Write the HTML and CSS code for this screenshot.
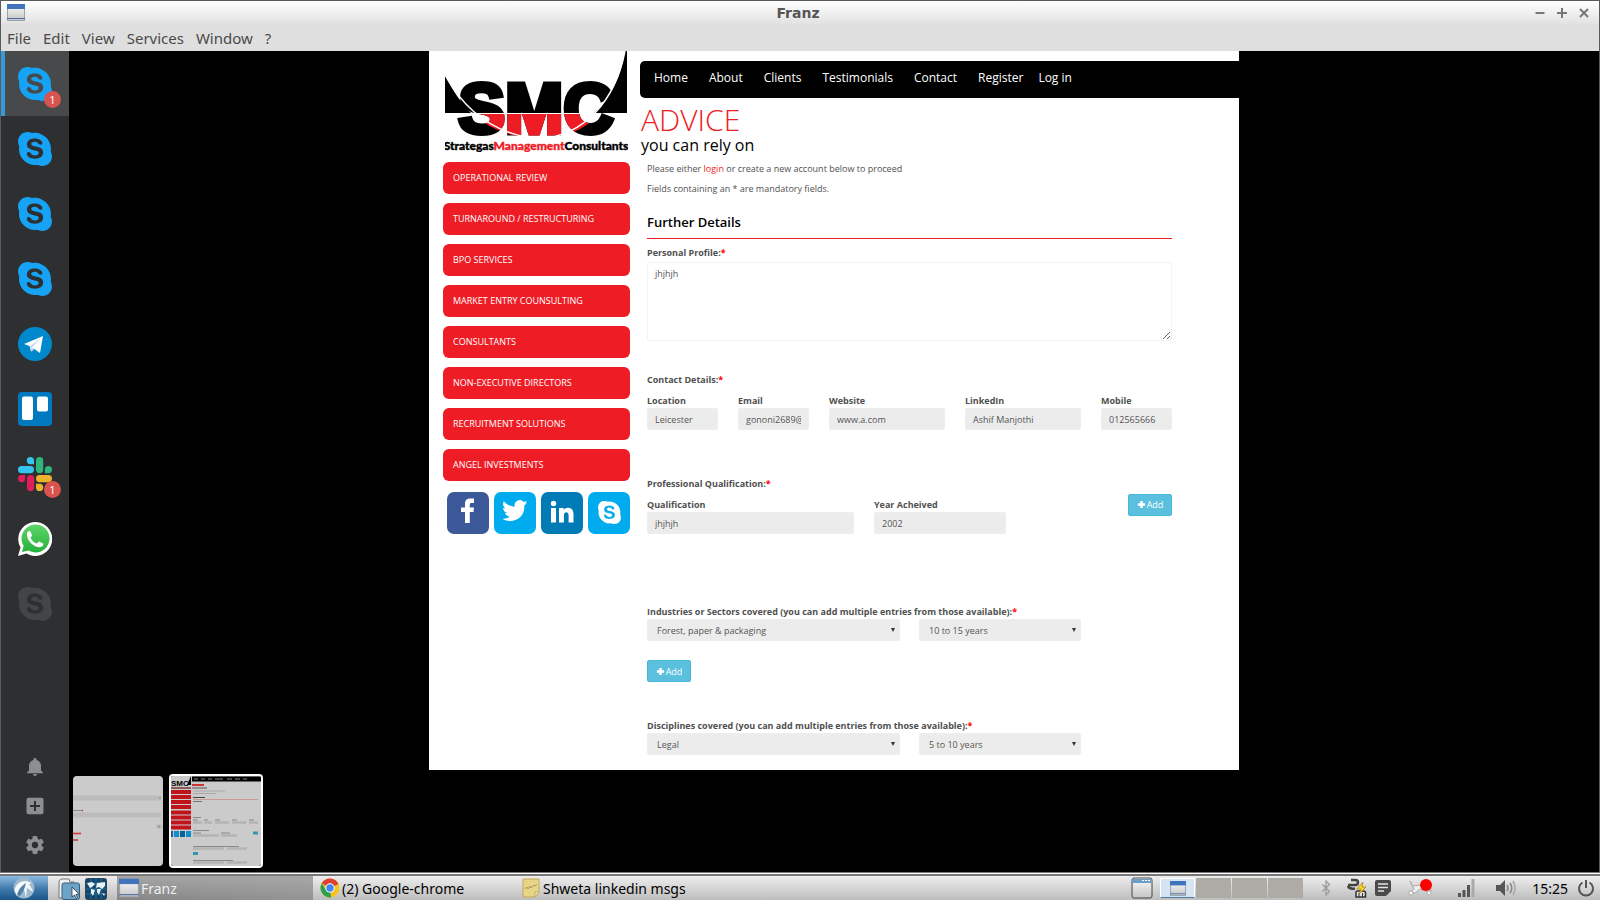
FILE: index.html
```html
<!DOCTYPE html>
<html lang="en">
<head>
<meta charset="utf-8">
<title>Franz</title>
<meta name="viewport" content="width=device-width, initial-scale=1">
<link rel="stylesheet" href="styles.css">
</head>
<body>
<svg class="defs" aria-hidden="true">
  <defs>
    <symbol id="skype" viewBox="0 0 24 24">
      <path d="M12.069 18.874c-4.023 0-5.82-1.979-5.82-3.464 0-.765.561-1.296 1.333-1.296 1.723 0 1.273 2.477 4.487 2.477 1.641 0 2.55-.895 2.55-1.811 0-.551-.269-1.16-1.354-1.429l-3.576-.895c-2.88-.724-3.403-2.286-3.403-3.751 0-3.047 2.861-4.191 5.549-4.191 2.471 0 5.393 1.373 5.393 3.199 0 .784-.688 1.24-1.453 1.24-1.469 0-1.198-2.037-4.164-2.037-1.469 0-2.292.664-2.292 1.617s1.153 1.258 2.157 1.487l2.637.587c2.891.649 3.624 2.346 3.624 3.944 0 2.476-1.902 4.324-5.722 4.324m11.084-4.882l-.029.135-.044-.24c.015.045.044.074.059.12.12-.675.181-1.363.181-2.052 0-1.529-.301-3.012-.898-4.42-.569-1.348-1.395-2.562-2.427-3.596-1.049-1.033-2.247-1.856-3.595-2.426-1.318-.631-2.801-.93-4.328-.93-.72 0-1.444.07-2.143.204l.119.06-.239-.033.119-.025C8.91.274 7.829 0 6.731 0c-1.789 0-3.47.698-4.736 1.967C.729 3.235.032 4.923.032 6.716c0 1.143.292 2.265.844 3.258l.02-.124.041.239-.06-.115c-.114.645-.172 1.299-.172 1.955 0 1.53.3 3.017.884 4.416.568 1.362 1.378 2.576 2.427 3.609 1.034 1.05 2.247 1.857 3.595 2.442 1.394.6 2.877.898 4.404.898.659 0 1.334-.06 1.977-.179l-.119-.062.24.046-.135.03c1.002.569 2.126.871 3.294.871 1.783 0 3.459-.69 4.733-1.963 1.259-1.259 1.962-2.951 1.962-4.749 0-1.138-.299-2.262-.853-3.266"/>
    </symbol>
    <linearGradient id="wa" x1="0" y1="0" x2="0" y2="1"><stop offset="0" stop-color="#5fd468"/><stop offset="1" stop-color="#25b13c"/></linearGradient>
    <linearGradient id="glass" x1="0" y1="0" x2="0" y2="1"><stop offset="0" stop-color="#fafafa"/><stop offset="1" stop-color="#c4c4c4"/></linearGradient>
    <symbol id="win" viewBox="0 0 18 17">
      <rect x=".5" y=".5" width="17" height="16" fill="url(#glass)" stroke="#9aa3ae"/>
      <rect width="18" height="5" fill="#3f74bd"/><rect y="14" width="18" height="1" fill="#4a6ea5"/>
    </symbol>
    <symbol id="plus" viewBox="0 0 10 10"><path d="M3.600 1h2.800v2.600H9v2.800H6.400V9H3.600V6.400H1V3.600h2.600z" fill="#fff"/></symbol>
  </defs>
</svg>

<div class="window">
  <header class="titlebar">
    <svg class="titleicon"><use href="#win"/></svg>
    <span class="title">Franz</span>
    <div class="controls">
      <button aria-label="Minimise"><svg viewBox="0 0 10 10"><path d="M.5 5h9" stroke="#777" stroke-width="2"/></svg></button>
      <button aria-label="Maximise"><svg viewBox="0 0 10 10"><path d="M0 5h10M5 0v10" stroke="#777" stroke-width="2"/></svg></button>
      <button aria-label="Close"><svg viewBox="0 0 10 10"><path d="M1 1l8 8M9 1L1 9" stroke="#777" stroke-width="2"/></svg></button>
    </div>
  </header>
  <nav class="menubar">
    <button>File</button><button>Edit</button><button>View</button><button>Services</button><button>Window</button><button>?</button>
  </nav>

  <div class="workspace">
    <aside class="services">
      <button class="service active" aria-label="Skype"><span class="logo"><svg class="skype"><use href="#skype"/></svg><span class="badge">1</span></span></button>
      <button class="service" aria-label="Skype"><span class="logo"><svg class="skype"><use href="#skype"/></svg></span></button>
      <button class="service" aria-label="Skype"><span class="logo"><svg class="skype"><use href="#skype"/></svg></span></button>
      <button class="service" aria-label="Skype"><span class="logo"><svg class="skype"><use href="#skype"/></svg></span></button>
      <button class="service" aria-label="Telegram"><span class="logo"><svg viewBox="0 0 34 34"><circle cx="17" cy="17" r="17" fill="#08c"/><path d="M12 19l1.500 6 4-4z" fill="#a9c6d8"/><path d="M6 17L25 9l-3 17-7-5-2 3-1.500-5z" fill="#fff"/><path d="M12 19l11-8-8.500 9-1.500 4.500z" fill="#c8daea"/></svg></span></button>
      <button class="service" aria-label="Trello"><span class="logo"><svg viewBox="0 0 34 34"><rect width="34" height="34" rx="4" fill="#0079bf"/><rect x="4" y="4.500" width="11" height="23.500" rx="2" fill="#fff"/><rect x="19" y="4.500" width="11" height="15" rx="2" fill="#fff"/></svg></span></button>
      <button class="service" aria-label="Slack"><span class="logo"><svg viewBox="0 0 34 34">
        <path d="M16 7.200h-3.600A3.600 3.600 0 1 1 16 3.600z" fill="#36c5f0"/><rect y="9" width="16" height="7.200" rx="3.600" fill="#36c5f0"/>
        <rect x="18" width="7.200" height="16.200" rx="3.600" fill="#2eb67d"/><path d="M26.800 16.200v-3.600a3.600 3.600 0 1 1 3.600 3.600z" fill="#2eb67d"/>
        <rect x="18" y="18" width="16" height="7.200" rx="3.600" fill="#ecb22e"/><path d="M18 26.800h3.600a3.600 3.600 0 1 1-3.600 3.600z" fill="#ecb22e"/>
        <rect x="9" y="18" width="7.200" height="16" rx="3.600" fill="#e01e5a"/><path d="M7.200 18v3.600A3.600 3.600 0 1 1 3.600 18z" fill="#e01e5a"/></svg><span class="badge">1</span></span></button>
      <button class="service" aria-label="WhatsApp"><span class="logo"><svg viewBox="0 0 34 34"><path d="M0 34l2.500-8.500A17 17 0 1 1 8.500 31.600z" fill="#fff"/><path d="M4 30l1.700-6A14 14 0 1 1 10.500 28.600z" fill="url(#wa)"/><path d="M9 11c1-2.500 3-2.500 3.500-1.500l1.500 3.700c.2.800-1.200 1.800-1.500 2.600 1.300 2.900 3.800 5 6.300 5.800.8-.3 1.600-2 2.400-2l4 2c.8 1-.7 3.500-3.200 3.600C15.500 25.400 8 18 9 11z" fill="#fff"/></svg></span></button>
      <button class="service" aria-label="Skype, disabled"><span class="logo"><svg class="skype off"><use href="#skype"/></svg></span></button>
      <div class="tools">
        <button aria-label="Notifications"><svg viewBox="0 0 18 18"><path d="M9 18a2 2 0 0 0 2-2H7a2 2 0 0 0 2 2zM15 12.500V7.800C15 5 13.200 2.700 10.500 2V1.400a1.500 1.500 0 0 0-3 0V2C4.800 2.700 3 5 3 7.800v4.700L1 14.500v.8h16v-.8z"/></svg></button>
        <button aria-label="Add service"><svg viewBox="0 0 18 18"><path d="M2.500.7h13a2 2 0 0 1 2 2v12.600a2 2 0 0 1-2 2h-13a2 2 0 0 1-2-2V2.700a2 2 0 0 1 2-2zM8 4v4H4v2h4v4h2v-4h4V8h-4V4z" fill-rule="evenodd"/></svg></button>
        <button aria-label="Settings"><svg viewBox="2 2 20 20"><path d="M19.430 12.980c.04-.32.07-.64.07-.98s-.03-.66-.07-.98l2.110-1.650c.19-.15.24-.42.12-.64l-2-3.460c-.12-.22-.39-.3-.61-.22l-2.490 1c-.52-.4-1.080-.73-1.690-.98l-.38-2.650A.49.49 0 0 0 14 2h-4c-.25 0-.46.18-.49.42l-.38 2.650c-.61.25-1.170.59-1.690.98l-2.490-1c-.23-.09-.49 0-.61.22l-2 3.460c-.13.22-.07.49.12.64l2.110 1.650c-.04.32-.07.65-.07.98s.03.66.07.98l-2.110 1.650c-.19.15-.24.42-.12.64l2 3.460c.12.22.39.3.61.22l2.490-1c.52.4 1.080.73 1.690.98l.38 2.650c.03.24.24.42.49.42h4c.25 0 .46-.18.49-.42l.38-2.650c.61-.25 1.170-.59 1.690-.98l2.490 1c.23.09.49 0 .61-.22l2-3.460c.12-.22.07-.49-.12-.64zM12 15.500a3.500 3.500 0 1 1 0-7 3.500 3.500 0 0 1 0 7z"/></svg></button>
      </div>
    </aside>

    <main class="stage">
      <div class="page">
        <div class="side">
          <svg class="smc" viewBox="0 0 183 101" role="img" aria-label="SMC Strategas Management Consultants">
            <defs>
              <clipPath id="red"><path d="M27 63C48 80 70 87 95 88c25-1 46-10 59-25z"/></clipPath>
              <text id="smctext" class="smctext" x="91" y="82" text-anchor="middle">SMC</text>
            </defs>
            <path d="M0 24C8 40 16 52 26 62H0zM182 0v62h-33C166 46 176 26 180 0z"/>
            <use href="#smctext" fill="#000" stroke="#000" stroke-width="5"/>
            <use href="#smctext" fill="#ee1c25" stroke="#ee1c25" stroke-width="5" clip-path="url(#red)"/>
            <path d="M0 24C20 60 50 84 95 88 140 84 170 50 180 0" fill="none" stroke="#fff" stroke-width="1.500"/>
            <path d="M24 62.500H156" stroke="#fff" stroke-width="1"/>
            <text class="smcname" x="91" y="99" text-anchor="middle">Strategas<tspan fill="#ee1c25" stroke="#ee1c25">Management</tspan>Consultants</text>
          </svg>
          <nav class="links">
            <a href="#">OPERATIONAL REVIEW</a>
            <a href="#">TURNAROUND / RESTRUCTURING</a>
            <a href="#">BPO SERVICES</a>
            <a href="#">MARKET ENTRY COUNSULTING</a>
            <a href="#">CONSULTANTS</a>
            <a href="#">NON-EXECUTIVE DIRECTORS</a>
            <a href="#">RECRUITMENT SOLUTIONS</a>
            <a href="#">ANGEL INVESTMENTS</a>
          </nav>
          <div class="social">
            <a class="fb" href="#" aria-label="Facebook"><svg viewBox="0 0 42 42"><path d="M18 31V20h-4v-4.500h4V12c0-4 2-5.500 5.500-5.500h3.500V11h-2.500c-1.300 0-1.700.6-1.700 1.700v2.800h4.200L26.500 20h-3.700v11z" fill="#fff"/></svg></a>
            <a class="tw" href="#" aria-label="Twitter"><svg viewBox="-2 -2.800 27.600 27.600"><path d="M19.900 7.600c.6-.4 1.100-1.100 1.300-1.800-.6.300-1.200.6-1.900.7a3.200 3.200 0 0 0-5.500 2.900c-2.700-.1-5-1.400-6.600-3.300-.9 1.500-.4 3.300 1 4.300-.5 0-1-.2-1.500-.4 0 1.500 1.100 2.900 2.600 3.200-.5.100-1 .1-1.400 0 .4 1.300 1.600 2.200 3 2.200-1.300 1-3 1.500-4.700 1.300 6 3.500 13.500.2 13.500-7.500 0-.2 0-.4 0-.6.600-.5 1.100-1 1.500-1.600-.4.200-.9.400-1.300.6z" fill="#fff" transform="translate(-3.300 -3.300) scale(1.080)"/></svg></a>
            <a class="li" href="#" aria-label="LinkedIn"><svg viewBox="0 0 42 42"><g fill="#fff"><circle cx="12.500" cy="11.500" r="2.700"/><path d="M10 16h5v14.500h-5zM18 16h4.700v2c2-3.300 9.800-3.600 9.800 4v8.500h-4.900V23c0-3.800-4.700-3.500-4.700 0v7.500H18z"/></g></svg></a>
            <a class="sk" href="#" aria-label="Skype"><svg viewBox="-10.500 -9.500 44 44"><use href="#skype" width="24" height="24" fill="#fff" stroke="#fff" stroke-width=".3"/></svg></a>
          </div>
        </div>

        <div class="content">
          <nav class="sitenav">
            <a href="#">Home</a><a href="#">About</a><a href="#">Clients</a><a href="#">Testimonials</a><a href="#">Contact</a><a href="#">Register</a><a class="login" href="#">Log in</a>
          </nav>
          <h1>ADVICE</h1>
          <p class="tagline">you can rely on</p>
          <form class="form">
            <p>Please either <a href="#">login</a> or create a new account below to proceed</p>
            <p>Fields containing an * are mandatory fields.</p>
            <h2>Further Details</h2>

            <section class="profile">
              <label class="cap" for="profile">Personal Profile:<i>*</i></label>
              <textarea id="profile">jhjhjh</textarea>
            </section>

            <section class="contact">
              <div class="cap">Contact Details:<i>*</i></div>
              <div class="contactgrid">
                <label>Location<input type="text" value="Leicester"></label>
                <label>Email<input type="text" value="gononi2689@"></label>
                <label>Website<input type="text" value="www.a.com"></label>
                <label>LinkedIn<input type="text" value="Ashif Manjothi"></label>
                <label>Mobile<input type="text" value="012565666"></label>
              </div>
            </section>

            <section class="qualification">
              <div>
                <div class="cap">Professional Qualification:<i>*</i></div>
                <div class="qualgrid">
                  <label>Qualification<input type="text" value="jhjhjh"></label>
                  <label>Year Acheived<input type="text" value="2002"></label>
                </div>
              </div>
              <button type="button" class="add"><svg><use href="#plus"/></svg>Add</button>
            </section>

            <section class="industries">
              <label class="cap" for="industry">Industries or Sectors covered (you can add multiple entries from those available):<i>*</i></label>
              <div class="selects">
                <span class="pick"><select id="industry"><option>Forest, paper &amp; packaging</option></select></span>
                <span class="pick"><select aria-label="Years in industry"><option>10 to 15 years</option></select></span>
              </div>
              <button type="button" class="add"><svg><use href="#plus"/></svg>Add</button>
            </section>

            <section class="disciplines">
              <label class="cap" for="discipline">Disciplines covered (you can add multiple entries from those available):<i>*</i></label>
              <div class="selects">
                <span class="pick"><select id="discipline"><option>Legal</option></select></span>
                <span class="pick"><select aria-label="Years in discipline"><option>5 to 10 years</option></select></span>
              </div>
            </section>
          </form>
        </div>
      </div>

      <div class="thumbs">
        <button class="thumb" aria-label="Previous image"><svg viewBox="0 0 90 90"><rect width="90" height="90" fill="#cbcbcb"/><path d="M0 22h88M0 39h88" stroke="#bcbcbc" stroke-width="5"/><path d="M0 34.500h9" stroke="#888"/><path d="M9 34.500h1M0 57.500h8M0 64h5" stroke="#d0303a" stroke-width="1.500"/><path d="M83 50.500h6" stroke="#bbb" stroke-width="4"/><path d="M87 21v2M86 49v3" stroke="#888"/></svg></button>
        <button class="thumb current" aria-label="Current image"><svg viewBox="0 0 90 90"><rect width="90" height="90" fill="#cbcbcb"/>
          <text class="mini" x="0" y="10">SMC</text><path d="M16 9l4-9v9z"/><path d="M0 12h20" stroke="#733" stroke-width="1.500"/>
          <path d="M21 3h69" stroke="#000" stroke-width="5"/><path d="M23 3h4m3 0h4m3 0h4m3 0h8m4 0h5m3 0h5m3 0h4" stroke="#888"/>
          <path d="M21 9h12" stroke="#c33" stroke-width="2"/><path d="M21 12h15" stroke="#555"/><path d="M22 15h32M22 17.500h23" stroke="#aaa"/><path d="M22 21.500h12" stroke="#444"/><path d="M22 23.500h65" stroke="#c77" stroke-width=".6"/><path d="M22 25.500h9" stroke="#777"/>
          <g fill="#c0131c"><path d="M0 14h20v4H0zM0 19h20v4H0zM0 24h20v4H0zM0 29h20v4H0zM0 34.500h20v4H0zM0 39.500h20v4H0zM0 44.500h20v4H0zM0 49.500h20v4H0z"/></g>
          <path d="M0 55h2v6H0z" fill="#33508f"/><path d="M3 55h5v6H3zM15 55h5v6h-5z" fill="#0a91cb"/><path d="M9 55h5v6H9z" fill="#07629a"/>
          <path d="M22 41.500h8M22 54.500h16M22 70.500h46M22 84.500h40" stroke="#777" stroke-width=".8"/><path d="M22 44h5m6 0h4m7 0h5m12 0h5m12 0h5M22 57h8m20 0h9" stroke="#888"/>
          <path d="M22 46.500h9m2 0h8m3 0h14m3 0h14m3 0h9M22 59.500h26m2 0h16M22 72.500h31m3 0h20M22 86.500h31m3 0h20" stroke="#b4b4b4" stroke-width="2.500"/><path d="M82 57h5M22 77.500h5" stroke="#3395b0" stroke-width="3"/></svg></button>
      </div>
    </main>
  </div>
</div>

<footer class="taskbar">
  <button class="start" aria-label="Menu"><svg viewBox="0 0 22 22"><circle cx="11" cy="11" r="10.500" fill="#9db8cf"/><path d="M1.500 13C3 7 7 4 13 4l6 2-3 1 3 5 1 3-6-4-1 10-2-9-7 7z" fill="#f4f8fb"/><path d="M4 18c1-5 4-9 9-12-1 5-3 9-6 13z" fill="#4f81ab"/></svg></button>
  <div class="launch">
    <button aria-label="File manager"><svg viewBox="0 0 22 22"><path d="M1 3l2-2h8l1 3h4v16H1z" fill="#eee" stroke="#777"/><rect x="4" y="5" width="17.500" height="16.500" rx="2" fill="#6ea3c9" stroke="#345f80"/><path d="M14 9v10l2.500-2 1.500 3.500 1.500-.8-1.600-3.200 3-.5z" fill="#fff" stroke="#333" stroke-width=".8"/></svg></button>
    <button aria-label="Web browser"><svg viewBox="0 0 22 22"><rect x=".5" y=".5" width="21" height="21" rx="2" fill="#12476b" stroke="#29485f"/><path d="M1 6h20M1 11h20M1 16h20M6 1v20M11 1v20M16 1v20" stroke="#3b83a8" stroke-width=".6"/><path d="M2 5l5-1 3 2-3 3-2 1zM6 11l4 1-2 6-2-3zM12 5l8-1v4l-3 3-3-2-3 1zM12 11h4l-2 6-2-3zM17 15l3 1-1 2z" fill="#e6f4fa"/></svg></button>
  </div>
  <div class="tasks">
    <button class="task on"><svg viewBox="0 0 18 17"><use href="#win"/></svg>Franz</button>
    <button class="task"><svg viewBox="0 0 20 20"><circle cx="10" cy="10" r="9.500" fill="#f5c51d"/><path d="M10 10L1.800 5.200A9.500 9.500 0 0 1 18.500 6z" fill="#dd4132"/><path d="M10 10l1 9.400A9.500 9.500 0 0 1 1.800 5.200L6 12z" fill="#2e9e4f"/><circle cx="10" cy="10" r="4.700" fill="#fff"/><circle cx="10" cy="10" r="3.700" fill="#4285f4"/></svg>(2) Google-chrome</button>
    <button class="task"><svg viewBox="0 0 20 20"><path d="M2 1h16v13l-4 5H2z" fill="#e8d587" stroke="#c1a95a"/><path d="M4 11l2-2 1 2 2-3 1 2 3-3 1 1 2-2" fill="none" stroke="#a08a45" stroke-width=".8"/><path d="M18 14h-4v5z" fill="#fff3bd" stroke="#c1a95a"/></svg>Shweta linkedin msgs</button>
  </div>
  <div class="tray">
    <svg class="desk" viewBox="0 0 22 22"><rect x="1" y="1" width="20" height="20" rx="2" fill="url(#glass)" stroke="#444"/><path d="M1.500 2h19v4h-19z" fill="#6e9dc5"/><path d="M11 3.500h8" stroke="#fff" stroke-dasharray="2 1"/></svg>
    <div class="pager"><button class="here" aria-label="Desktop 1"><svg><use href="#win"/></svg></button><button aria-label="Desktop 2"></button><button aria-label="Desktop 3"></button><button aria-label="Desktop 4"></button></div>
    <div class="status">
      <svg viewBox="0 0 20 20"><path d="M6.500 6.500l7 7L10 17V3l3.500 3.500-7 7" fill="none" stroke="#999" stroke-width="1.200"/></svg>
      <svg viewBox="0 0 20 20"><path d="M1 7h5c3 0 5 0 5-2.500S9 2 7 2H4M1 8c1 3 4 3 7 2.500" fill="none" stroke="#444" stroke-width="2.600"/><path d="M9 14.500q0-1.500 2-1.500h5q2.500 0 2.500 2v4H9z" fill="#ddd" stroke="#333" stroke-width="1.500"/><path d="M12 19v-4M15.500 19v-4" stroke="#333"/><path d="M16 4l-6 7h4l-2 5 7-7h-4z" fill="#ffd52b" stroke="#a87b00" stroke-width=".7"/></svg>
      <svg viewBox="0 0 20 20"><path d="M2 4q0-2 2-2h12q2 0 2 2v9l-5 5H4q-2 0-2-2z" fill="#4a4a4a"/><path d="M5 6h10M5 9.500h10M5 13h6" stroke="#e3e3e3" stroke-width="1.500"/></svg>
      <svg class="plane" viewBox="0 0 26 20"><path d="M3 3l3 5 7-1 5 3h6v3h-6l-5-2-5 4-5-1 4-3z" fill="#eee" stroke="#aaa"/><circle cx="4" cy="15" r="2" fill="#fff" stroke="#aaa"/><circle cx="22" cy="15" r="2" fill="#fff" stroke="#aaa"/><circle cx="19" cy="7" r="6" fill="#f00"/></svg>
      <svg viewBox="0 0 20 20"><path d="M2 19v-4h3v4zM6.500 19v-7h3v7zM11 19V7h3v12z" fill="#555"/><path d="M15.500 19V1h3v18z" fill="#aaa"/></svg>
      <svg viewBox="0 0 22 20"><path d="M1 7h4l5-5v16l-5-5H1z" fill="#555"/><path d="M12 7q2 3 0 6M15 5q3.500 5 0 10" fill="none" stroke="#888" stroke-width="1.600"/><path d="M18 3q4 7 0 14" fill="none" stroke="#aaa" stroke-width="1.600"/></svg>
    </div>
    <time>15:25</time>
    <button class="power" aria-label="Power"><svg viewBox="0 0 18 18"><path d="M5.500 3.500a7 7 0 1 0 7 0M9 1v8" fill="none" stroke="#555" stroke-width="2"/></svg></button>
  </div>
</footer>
</body>
</html>
```
FILE: styles.css
```css
* { box-sizing: border-box; }
body {
  margin: 0;
  min-height: 100vh;
  display: flex;
  flex-direction: column;
  background: #000;
  font-family: "Open Sans", sans-serif;
}
button { border: 0; padding: 0; background: none; color: inherit; font: inherit; }
a { color: inherit; text-decoration: none; }
svg { display: block; }
.defs { position: absolute; width: 0; height: 0; }

/* window frame */
.window {
  flex: 1;
  display: flex;
  flex-direction: column;
  border: 1px solid #5c5a5a;
  border-bottom: 0;
}
.titlebar {
  height: 25px;
  display: grid;
  grid-template-columns: 1fr auto 1fr;
  align-items: center;
  padding: 0 10px 2px 6px;
  background: linear-gradient(#fff, #dfdfdf);
}
.titleicon { width: 18px; height: 17px; }
.title { font: bold 14px "DejaVu Sans", sans-serif; color: #555; }
.controls { display: flex; justify-content: flex-end; gap: 12px; }
.controls svg { width: 10px; height: 10px; }
.menubar {
  height: 25px;
  display: flex;
  align-items: center;
  gap: 12px;
  padding: 0 6px 2px;
  background: #dfdfdf;
  color: #4a4a4a;
  font: 15px "Noto Sans", sans-serif;
}
.workspace { flex: 1; display: flex; }

/* service sidebar */
.services {
  width: 68px;
  flex: none;
  display: flex;
  flex-direction: column;
  background: #2d2f31;
}
.service { height: 65px; display: grid; place-items: center; }
.service.active { background: #47494b; border-left: 4px solid #3498db; padding-right: 4px; }
.logo { position: relative; width: 34px; height: 34px; }
.logo svg { width: 34px; height: 34px; }
.skype { fill: #17a3f5; }
.skype.off { fill: #434548; }
.badge {
  position: absolute;
  right: -9px;
  bottom: -7px;
  width: 17px;
  height: 17px;
  border-radius: 50%;
  background: #d9534f;
  color: #fff;
  font: 11px/17px "Open Sans", sans-serif;
  text-align: center;
}
.tools {
  margin-top: auto;
  padding-bottom: 18px;
  display: flex;
  flex-direction: column;
  align-items: center;
  gap: 21px;
}
.tools svg { width: 18px; height: 18px; fill: #8c8e8f; }

/* image stage */
.stage { position: relative; flex: 1; display: flex; justify-content: center; align-items: flex-start; background: #000; }
.page {
  width: 100%;
  max-width: 810px;
  display: grid;
  grid-template-columns: 187px 1fr;
  gap: 10px;
  padding: 0 0 15px 14px;
  background: #fff;
}
.smc { width: 183px; height: 101px; margin: 0 2px; }
.smctext { font: bold 70px "Liberation Sans", sans-serif; }
.smcname { font: 900 12px Lato, sans-serif; stroke: #000; stroke-width: 0.4px; }
.links { display: flex; flex-direction: column; gap: 9px; margin-top: 10px; }
.links a {
  height: 32px;
  padding-left: 10px;
  border-radius: 6px;
  background: #ee1c25;
  color: #fff;
  font-size: 9px;
  line-height: 31px;
}
.social { display: flex; justify-content: flex-end; gap: 5px; margin-top: 11px; }
.social a { width: 42px; height: 42px; border-radius: 7px; overflow: hidden; }
.fb { background: #3b5998; }
.tw, .sk { background: #00aced; }
.li { background: #007bb6; }

.content { min-width: 0; padding-top: 10px; }
.sitenav {
  height: 37px;
  display: flex;
  gap: 21px;
  padding-left: 14px;
  border-radius: 5px 0 0 5px;
  background: #000;
  color: #fff;
  font-size: 12px;
  line-height: 34px;
}
.sitenav .login { margin-left: -6px; }
h1 { margin: 6px 0 0 1px; color: #ee1c25; font-size: 30px; font-weight: 300; line-height: 32px; }
.tagline { margin: 0 0 0 1px; color: #000; font-size: 16px; line-height: 18px; }
.form { padding: 5px 67px 0 7px; color: #505050; font-size: 9px; }
.form p { margin: 0; line-height: 20px; }
.form p a { color: #ee1c25; }
h2 {
  margin: 13px 0 0;
  padding-bottom: 6px;
  border-bottom: 1px solid #ee1c25;
  color: #000;
  font-size: 13px;
  font-weight: 600;
  line-height: 20px;
}
.cap, .form label { display: block; font-weight: 700; line-height: 14px; min-width: 0; }
.cap i { color: #f00; font-style: normal; }
input, textarea, select {
  display: block;
  width: 100%;
  border: 1px solid #eee;
  border-radius: 2px;
  background: #ececec;
  color: #555;
  font: 9px "Open Sans", sans-serif;
}
input { height: 22px; padding: 0 7px; }
textarea { height: 79px; margin-top: 2px; padding: 4px 7px; border-color: #f3f3f3; background: #fff; }
select { height: 22px; padding: 0 9px; appearance: none; }
.profile { margin-top: 7px; }
.contact { margin-top: 32px; }
.contactgrid { display: grid; grid-template-columns: 71fr 71fr 116fr 116fr 71fr; gap: 20px; margin-top: 7px; }
.qualification { display: grid; grid-template-columns: 359fr 166fr; align-items: center; margin-top: 47px; }
.qualgrid { display: grid; grid-template-columns: 207fr 132fr; gap: 20px; margin-top: 7px; }
.add {
  width: 44px;
  height: 22px;
  display: flex;
  align-items: center;
  justify-content: center;
  gap: 1px;
  border: 1px solid #46b8da;
  border-radius: 2px;
  background: #5bc0de;
  color: #fff;
  font-size: 9px;
}
.add svg { width: 9px; height: 9px; }
.qualification .add { justify-self: end; margin-bottom: 2px; }
.industries { margin-top: 71px; }
.industries .add { margin-top: 19px; }
.disciplines { margin-top: 37px; }
.selects { display: grid; grid-template-columns: 253fr 162fr 72fr; gap: 19px; }
.pick { position: relative; }
.pick::after {
  content: "";
  position: absolute;
  right: 5px;
  top: 9px;
  border: 2px solid transparent;
  border-top: 4px solid #333;
  border-bottom: 0;
}

/* thumbnails over the stage */
.thumbs { position: absolute; left: 4px; bottom: 4px; display: flex; align-items: center; gap: 6px; }
.thumb svg { width: 90px; height: 90px; border-radius: 4px; }
.thumb.current { border: 2px solid #fff; border-radius: 4px; }
.thumb.current svg { border-radius: 2px; }
.mini { font: bold 8px "Liberation Sans", sans-serif; }

/* taskbar */
.taskbar {
  height: 28px;
  display: flex;
  border-top: 1px solid #777;
  background: linear-gradient(#fff 0 1px, #777 1px 3px, #eee 3px, #bdbdbd);
  color: #000;
  font: 14px "Noto Sans", sans-serif;
}
.start { width: 48px; margin-top: 3px; display: grid; place-items: center; background: linear-gradient(#8dbbe3, #3e77a9 55%, #1c5688); }
.start svg { width: 22px; height: 22px; }
.launch { display: flex; gap: 5px; padding: 4px 10px 0; }
.launch svg { width: 22px; height: 22px; }
.tasks { flex: 1; display: flex; gap: 5px; padding-top: 3px; }
.task { width: 196px; display: flex; align-items: center; gap: 2px; padding: 0 2px; white-space: nowrap; }
.task svg { width: 20px; height: 20px; }
.task.on { background: linear-gradient(90deg, #8a8a8a00, #aaa6), linear-gradient(#a5a5a5, #858585); color: #eee; }
.tray { display: flex; align-items: center; padding: 3px 5px 0 0; }
.desk { width: 22px; height: 22px; margin-right: 7px; }
.pager { display: flex; gap: 1px; }
.pager button { width: 35px; height: 20px; background: #aeaaa5; display: grid; place-items: center; }
.pager .here { background: #d4e4f2; border: 1px solid #fff; border-bottom-color: #4d7ba5; }
.pager svg { width: 16px; height: 15px; }
.status { display: flex; align-items: center; gap: 11px; margin-left: 13px; }
.status svg { width: 20px; height: 20px; }
.status svg:nth-child(3) { margin-left: -5px; }
.status .plane { width: 26px; margin-left: 3px; }
.status svg:nth-child(5) { margin-left: 12px; }
.status svg:nth-child(6) { width: 22px; margin-left: 8px; }
time { margin: 0 9px 0 15px; }
.power svg { width: 18px; height: 18px; }
```
